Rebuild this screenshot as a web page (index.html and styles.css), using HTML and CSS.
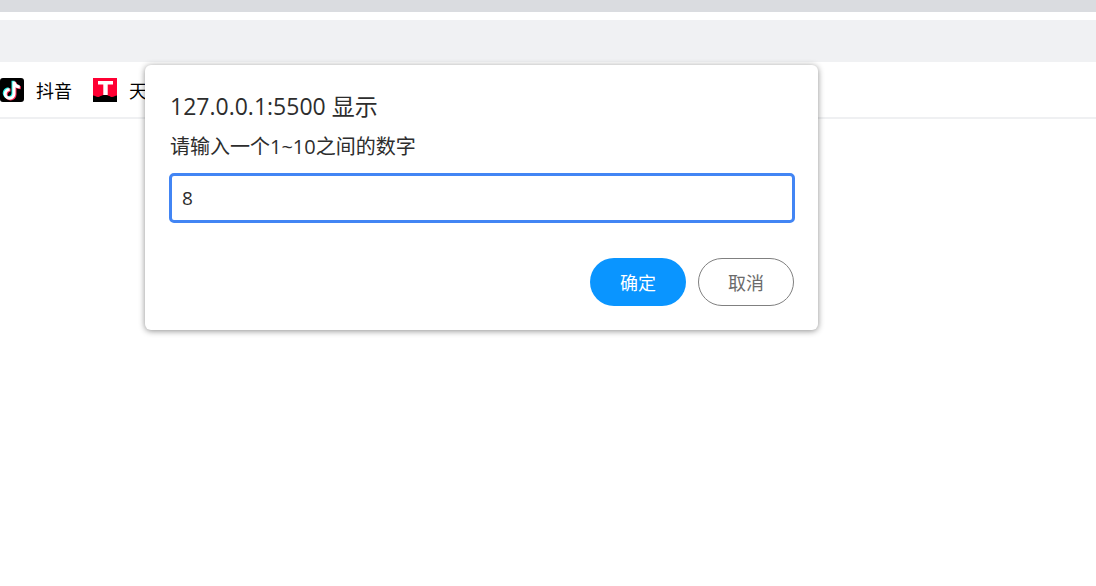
FILE: index.html
```html
<!DOCTYPE html>
<html lang="zh-CN">
<head>
    <meta charset="UTF-8">
    <title>127.0.0.1:5500</title>
    <link rel="stylesheet" href="styles.css">
</head>
<body>
    <div class="tab-strip"></div>
    <div class="address-bar"></div>

    <!-- 书签栏 -->
    <div class="bookmarks">
        <a class="bookmark">
            <svg class="bookmark-icon" viewBox="0 0 24 24">
                <rect width="24" height="24" rx="3" fill="#000"/>
                <path class="note" stroke="#25f4ee" transform="translate(-1 -0.7)" d="M14 3.500v12.300a4.400 4.400 0 1 1-4.400-4.400M14 3.800c.4 3 2.600 5 5.800 5.200"/>
                <path class="note" stroke="#fe2c55" transform="translate(1 0.7)" d="M14 3.500v12.300a4.400 4.400 0 1 1-4.400-4.400M14 3.800c.4 3 2.600 5 5.800 5.200"/>
                <path class="note" stroke="#fff" d="M14 3.500v12.300a4.400 4.400 0 1 1-4.400-4.400M14 3.800c.4 3 2.600 5 5.800 5.200"/>
            </svg>
            <span>抖音</span>
        </a>
        <a class="bookmark">
            <svg class="bookmark-icon" viewBox="0 0 24 24">
                <rect width="24" height="24" fill="#ff0033"/>
                <path d="M0 24V17.500c2 0 3 1.500 5 1.500s3-2 7-2 5 2 7 2 3-1.500 5-1.500V24z" fill="#000"/>
                <path d="M5 3h15v3.500h-5.300V17h-4.400V6.500H5z" fill="#fff"/>
            </svg>
            <span>天猫</span>
        </a>
    </div>

    <!-- prompt 弹窗 -->
    <div class="dialog">
        <div class="dialog-title">127.0.0.1:5500 显示</div>
        <div class="dialog-msg">请输入一个1~10之间的数字</div>
        <input class="dialog-input" type="text" value="8">
        <div class="button-group">
            <button class="primary-btn">确定</button>
            <button class="secondary-btn">取消</button>
        </div>
    </div>
</body>
</html>
```

FILE: styles.css
```css
:root {
    --text: #2d2d2d;
    --blue: #0a95ff;
    --focus: #4285f4;
}

html, body {
    height: 100%;
}

body {
    margin: 0;
    background: white;
    font-family: 'Open Sans', 'Noto Sans CJK SC', sans-serif;
    overflow: hidden;
}

.tab-strip {
    height: 12px;
    background: #dadce0;
}

.address-bar {
    height: 42px;
    margin-top: 8px;
    background: #f0f1f3;
}

.bookmarks {
    display: flex;
    align-items: center;
    gap: 21px;
    box-sizing: border-box;
    height: 57px;
    padding-top: 1px;
    border-bottom: 2px solid #eff0f2;
    overflow: hidden;
}

.bookmark {
    display: flex;
    align-items: center;
    gap: 12px;
    font-size: 18px;
    color: #000;
    font-family: 'Noto Sans CJK SC', sans-serif;
}

.bookmark-icon {
    width: 24px;
    height: 24px;
    flex: none;
}

.note {
    fill: none;
    stroke-width: 3;
}

.dialog {
    position: absolute;
    left: 145px;
    top: 65px;
    width: 673px;
    height: 265px;
    box-sizing: border-box;
    padding: 26px 23px 24px 24px;
    background: white;
    border-radius: 6px;
    box-shadow: 0 1px 6px rgba(0, 0, 0, 0.45);
    color: var(--text);
}

.dialog-title {
    padding-left: 1px;
    font-size: 23px;
    line-height: 31px;
}

.dialog-msg {
    margin-top: 11px;
    padding-left: 1px;
    font-size: 20px;
    line-height: 28px;
}

.dialog-input {
    display: block;
    box-sizing: border-box;
    width: 626px;
    height: 50px;
    margin-top: 12px;
    padding: 0 10px;
    border: 3px solid var(--focus);
    border-radius: 5px;
    outline: none;
    font: 19px 'Open Sans', sans-serif;
    color: var(--text);
}

.button-group {
    display: flex;
    justify-content: flex-end;
    gap: 12px;
    margin-top: 35px;
    padding-right: 1px;
}

button {
    box-sizing: border-box;
    width: 96px;
    height: 48px;
    border-radius: 24px;
    font: 18px 'Noto Sans CJK SC', sans-serif;
    padding: 0;
}

.primary-btn {
    background: var(--blue);
    border: none;
    color: white;
}

.secondary-btn {
    background: white;
    border: 1px solid #808080;
    color: #6b6b6b;
}
```
